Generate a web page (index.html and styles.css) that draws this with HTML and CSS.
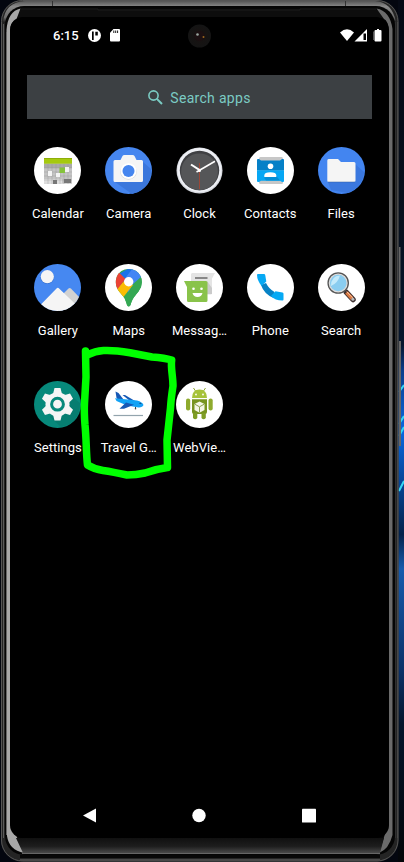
FILE: index.html
```html
<!DOCTYPE html>
<html lang="en">
<head>
<meta charset="utf-8">
<title>Apps</title>
<link rel="stylesheet" href="styles.css">
</head>
<body>
<svg class="device" viewBox="0 0 404 862" aria-hidden="true">
  <defs>
    <linearGradient id="wall" x1="0" y1="0" x2="0" y2="1">
      <stop offset="0" stop-color="#050914"/><stop offset=".25" stop-color="#07101d"/><stop offset=".4" stop-color="#06162d"/>
      <stop offset=".43" stop-color="#0a3d8c"/><stop offset=".5" stop-color="#0968df"/><stop offset=".62" stop-color="#03224b"/>
      <stop offset=".66" stop-color="#165bad"/><stop offset=".78" stop-color="#0a3066"/><stop offset=".84" stop-color="#04152b"/><stop offset="1" stop-color="#030508"/>
    </linearGradient>
    <linearGradient id="top" x1="0" y1="0" x2="0" y2="1">
      <stop offset="0" stop-color="#555"/><stop offset=".25" stop-color="#898989"/><stop offset=".75" stop-color="#6b6b6b"/><stop offset="1" stop-color="#111"/>
    </linearGradient>
    <linearGradient id="bottom" x1="0" y1="0" x2="0" y2="1">
      <stop offset="0" stop-color="#101010"/><stop offset=".55" stop-color="#1d1d1d"/><stop offset="1" stop-color="#494949"/>
    </linearGradient>
    <radialGradient id="cam"><stop offset="0" stop-color="#2c1718"/><stop offset=".4" stop-color="#171312"/><stop offset="1" stop-color="#141414"/></radialGradient>
  </defs>
  <rect width="404" height="862" fill="#03060f"/>
  <rect x="398" width="6" height="862" fill="url(#wall)"/>
  <path d="M399 392l5-7M399 424l5-8M399 436l5-9M399 491l5-10" stroke="#35d7f5" stroke-width="2"/>
  <path d="M399 247h1.500v51H399zM399 341h2v105h-2z" fill="#666"/>
  <rect x="1" y="0" width="397.500" height="861.500" rx="21" fill="#242424"/>
  <rect x="1.500" y=".5" width="396.500" height="860.500" rx="21" fill="none" stroke="#555"/>
  <path d="M3 22Q5 2 25 1H375Q392 2 396 22L392 20Q388 7 373 7H25Q9 7 6 23Z" fill="url(#top)"/>
  <path d="M52.500 1v5M345.500 1v5" stroke="#333"/>
  <rect x="5" y="6" width="390" height="849" rx="19" fill="#050505"/>
  <path d="M3.500 24V838" stroke="#5a5a5a"/>
  <path d="M395.500 22V838" stroke="#303030"/><path d="M397.500 22V838" stroke="#484848"/>
  <path d="M22 8.500H370" stroke="#080808" stroke-width="2"/>
  <path d="M21 9H376L386 18H15Z" fill="#0d0d0d"/>
  <path d="M21 9H98V10H300V9H376" stroke="#1d1d1d" fill="none"/>
  <path d="M6.500 30Q8 11 20.500 8.500L16.500 19Q10 22 10 32V820Q11 831 16 835L24 853Q9 850 7 836Z" fill="#a8a8a8"/>
  <path d="M6.500 32V835" stroke="#666"/>
  <path d="M376.500 8.500Q390 11 392.500 29V835Q389 849 379 853L385 834Q389 828 389 821V32Q388 20 384 19Z" fill="#6b6b6b"/>
  <path d="M16 838H384L380 853H23Z" fill="url(#bottom)"/>
  <path d="M22 853.500H380" stroke="#666"/>
  <path d="M20 856.500H380" stroke="#080808" stroke-width="3"/>
  <path d="M20 860H380" stroke="#484848" stroke-width="2"/>
  <rect x="10" y="17" width="379" height="821" rx="13"/>
  <circle cx="199.500" cy="36" r="11.500" fill="url(#cam)"/>
  <circle cx="199.500" cy="36" r="5" fill="#1c1012"/>
  <circle cx="197.500" cy="34.500" r="1.300" fill="#9aa7a0"/><circle cx="203.500" cy="37" r="1" fill="#9b651e"/>
</svg>

<main class="screen">
  <header class="status">
    <span class="time">6:15</span>
    <svg class="notice" viewBox="0 0 13 13"><circle cx="6.500" cy="6.500" r="6.500" fill="#fff"/><path d="M4 2.500H5.700V11H4zM7.300 2.800H9.800V6.500H7.300z" fill="#000"/></svg>
    <svg class="sd" viewBox="0 0 10 13"><path d="M3.500 0H9q1 0 1 1V11.500q0 1-1 1H1q-1 0-1-1V3.700z" fill="#fff"/><path d="M3.800 1.500V4M5.700 1.500V4M7.600 1.500V4" stroke="#000" stroke-width=".9"/></svg>
    <svg class="signals" viewBox="0 0 42 13">
      <path d="M0 3.500Q7-3 14 3.500L7 12z" fill="#fff"/>
      <path d="M27 0V12.500H14.500z" fill="#fff"/><path d="M23.500 4.500H26V11H23.500z" fill="#000"/>
      <path d="M35.500 1H37V0h2v1h1.500q1 0 1 1v9.500q0 1-1 1h-5q-1 0-1-1V2q0-1 1-1z" fill="#fff"/><path d="M33.500 2.500v8.500" stroke="#555"/>
    </svg>
  </header>

  <div class="search">
    <svg class="glass" viewBox="0 0 15 15"><circle cx="5.500" cy="5.500" r="4.600" fill="none" stroke="#7bcbc3" stroke-width="1.600"/><path d="M8.900 8.900L14 14" stroke="#7bcbc3" stroke-width="2"/></svg>
    <span class="hint">Search apps</span>
  </div>

  <section class="apps">
    <div class="app">
      <svg class="icon" viewBox="0 0 47 47"><circle cx="23.500" cy="23.500" r="23.500" fill="#fff"/>
        <path d="M10 16h28v20.700H10z" fill="#c4c4c4"/><path d="M10 11h28v5.700H10z" fill="#a5c90f"/><path d="M10 11h28v1H10z" fill="#8fae08"/>
        <path d="M10 17h28v4H10z" fill="#aaa"/><path d="M10 32h18v4.700H10z" fill="#dedede"/>
        <path d="M14 17v20M18 17v20M22 17v20M26 17v20M30 17v20M34 17v20M10 21h28M10 25h28M10 29h28M10 33h28" stroke="#929292" stroke-width=".35"/>
        <path d="M19 33h4v4h-4zM30 32h7v4h-7z" fill="#777"/><path d="M14 24h4v5h-4zM22 26h4v4h-4zM31 20h4v5h-4z" fill="#f4f4f4"/><path d="M25.500 20.500H31V26h-5.500z" fill="#85c33c"/></svg>
      <span>Calendar</span>
    </div>
    <div class="app">
      <svg class="icon" viewBox="0 0 47 47"><circle cx="23.500" cy="23.500" r="23.500" fill="#4686ef"/>
        <path d="M38 15L46 22Q47 38 33 45L27 47 10 35z" fill="#3b77dc"/>
        <path d="M10 13H15.500L17.500 9Q18 8 19.500 8H27.500Q29 8 29.500 9L31.500 13H36.500Q38 13 38 14.500V33.500Q38 35 36.500 35H10Q8.500 35 8.500 33.500V14.500Q8.500 13 10 13z" fill="#f5f5f5"/>
        <circle cx="23.500" cy="24.500" r="8.300" fill="#dadada"/><circle cx="23.500" cy="24" r="8" fill="#fff"/><circle cx="23.500" cy="24" r="6" fill="#4686ef"/></svg>
      <span>Camera</span>
    </div>
    <div class="app">
      <svg class="icon" viewBox="0 0 47 47"><circle cx="23.500" cy="23.500" r="23" fill="#d5d8de"/><circle cx="23.500" cy="23.100" r="22" fill="#eef0f5"/><circle cx="23.500" cy="23.500" r="19.700" fill="#404144"/><circle cx="23.500" cy="24.800" r="18.400" fill="#555658"/>
        <path d="M23.500 16V42" stroke="#ad442f" stroke-width=".8"/><path d="M15 17.500L24.500 23.700" stroke="#fff" stroke-width="2"/><path d="M20.500 25L39 14.200" stroke="#fff" stroke-width="1.600"/><circle cx="23.500" cy="23.500" r="1.500" fill="#fff"/></svg>
      <span>Clock</span>
    </div>
    <div class="app">
      <svg class="icon" viewBox="0 0 47 47"><circle cx="23.500" cy="23.500" r="23.500" fill="#fff"/>
        <rect x="12" y="10" width="24" height="27" rx="1.500" fill="#c7c7c7"/><path d="M10 13q0-1 1-1h1l2 1.500h19l2-1.500h1q1 0 1 1V23.500H10z" fill="#0580c7"/>
        <path d="M10 23.300H37V34q0 1-1 1h-1l-2-1.300H14L12 35h-1q-1 0-1-1z" fill="#06a7f4"/><path d="M29 28.500l4 5H19l-2-3z" fill="#058fd6"/><circle cx="23.500" cy="19.300" r="2.800" fill="#fff"/><path d="M17.300 30V28.500q0-3.300 6-3.300t6 3.300V30z" fill="#fff"/></svg>
      <span>Contacts</span>
    </div>
    <div class="app">
      <svg class="icon" viewBox="0 0 47 47"><circle cx="23.500" cy="23.500" r="23.500" fill="#4385f0"/><path d="M37 17l9 8Q45 40 30 46L13 43 10 35z" fill="#3b78df"/><path d="M10.500 12H20l3 3H36q1.500 0 1.500 1.500V33.500Q37.500 35 36 35H10.700Q9.300 35 9.300 33.500V13.500q0-1.500 1.200-1.500z" fill="#f5f5f5"/><path d="M10 35h27" stroke="#315e9e" stroke-width=".5"/></svg>
      <span>Files</span>
    </div>
    <div class="app">
      <svg class="icon" viewBox="0 0 47 47"><clipPath id="gc"><circle cx="23.500" cy="23.500" r="23.500"/></clipPath><g clip-path="url(#gc)"><path d="M0 0h47v47H0z" fill="#4688f1"/><circle cx="13.300" cy="13.300" r="6.800" fill="#3c76d3"/><circle cx="13.300" cy="12.600" r="6.600" fill="#f5f5f5"/><path d="M25 34L34.500 24.500q1.200-1 2.400 0L49 37V47H25z" fill="#d2d2d2"/><path d="M3 44.500L22.500 24.500q1.300-1.300 2.600 0L45 43.500V47H3z" fill="#f5f5f5"/></g></svg>
      <span>Gallery</span>
    </div>
    <div class="app">
      <svg class="icon" viewBox="0 0 47 47"><circle cx="23.500" cy="23.500" r="23.500" fill="#fff"/>
        <clipPath id="pin"><path d="M23.700 5Q32 5 35.500 12Q39 20 33.500 27.500C28 34 27 36 25.500 41Q23.700 44.500 22 41C20.500 35 18 32 14.500 28Q9 21 11.700 13Q15 5 23.700 5z"/></clipPath>
        <g clip-path="url(#pin)"><path d="M10 4h29v40H10z" fill="#34a853"/><path d="M14 10L24 4l5 2L19 17z" fill="#1a73e8"/><path d="M28 4L38 12 24 29 18 17z" fill="#4285f4"/><path d="M38 11V42H17L27 21z" fill="#34a853"/><path d="M10 27L19 17l9 4L16 36z" fill="#fbbc04"/><path d="M10 9l4.500 0 6 6L10 28z" fill="#ea4335"/></g><circle cx="23.700" cy="17.800" r="4.700" fill="#fff"/></svg>
      <span>Maps</span>
    </div>
    <div class="app">
      <svg class="icon" viewBox="0 0 47 47"><circle cx="23.500" cy="23.500" r="23.500" fill="#fff"/><path d="M16 9H39L36 14.500V29q0 1.500-1.500 1.500H16.500Q15 30.500 15 29V10z" fill="#e4e4e4"/><path d="M31 17l5 7v6h-5z" fill="#cacaca"/><path d="M19 14h12.500" stroke="#888" stroke-width="2"/><path d="M8 17H30q1.500 0 1.500 1.500V36.500Q31.500 38 30 38H12.500Q11 38 11 36.500V23z" fill="#89c34a"/><circle cx="17.500" cy="24.700" r="1.300" fill="#fff"/><circle cx="25.500" cy="24.700" r="1.300" fill="#fff"/><path d="M16.500 29H26.500Q25.500 33 21.500 33T16.500 29z" fill="#fff"/></svg>
      <span>Messag…</span>
    </div>
    <div class="app">
      <svg class="icon" viewBox="0 0 47 47"><circle cx="23.500" cy="23.500" r="23.500" fill="#fff"/><path d="M14 21l5-2q3 6 8.500 9l-1 6Q17 30 14 21z" fill="#0782c5"/><path d="M11 10H17q1 0 1.200 1L19.300 17.500 14.500 22Q10 16 10 11q0-1 1-1z" fill="#06a9f4"/><path d="M28.500 27.300L35.500 28.500q1 .2 1 1.200V35.500q0 1-1 1Q28 36.500 24 32z" fill="#06a9f4"/></svg>
      <span>Phone</span>
    </div>
    <div class="app">
      <svg class="icon" viewBox="0 0 47 47"><circle cx="23.500" cy="23.500" r="23.500" fill="#fff"/><path d="M26 26l3 3" stroke="#555" stroke-width="3"/><path d="M28.500 28.500L35 35.500" stroke="#3d3030" stroke-width="5.500" stroke-linecap="round"/><path d="M28.500 28.500L34 34.500" stroke="#d87943" stroke-width="3.500"/><path d="M28.700 27.700l6 6.200" stroke="#ffc19a"/><circle cx="34.900" cy="35.200" r="1.500" fill="#bbb"/><circle cx="20.200" cy="19" r="9.800" fill="#8acdf0" stroke="#555" stroke-width="2"/><circle cx="20.200" cy="19" r="8.900" fill="none" stroke="#ddd" stroke-width="1.200"/><path d="M13 22Q13 12 22 11.500 20 19 13 22z" fill="#c4eafa"/></svg>
      <span>Search</span>
    </div>
    <div class="app">
      <svg class="icon" viewBox="0 0 47 47"><circle cx="23.500" cy="23.500" r="23.500" fill="#07897b"/><path d="M35 13L46 22Q46 38 34 44L27 46 16 36z" fill="#067d70"/>
        <g fill="#f5f5f5"><circle cx="23.500" cy="23.200" r="12"/><path id="tooth" d="M20.500 7h6l1.500 6h-9zM20.500 39.400h6l1.500-6h-9z"/><use href="#tooth" transform="rotate(60 23.500 23.200)"/><use href="#tooth" transform="rotate(120 23.500 23.200)"/></g><circle cx="23.500" cy="23.200" r="5.900" fill="#f5f5f5" stroke="#07897b" stroke-width="3"/></svg>
      <span>Settings</span>
    </div>
    <div class="app">
      <svg class="icon" viewBox="0 0 47 47"><circle cx="23.500" cy="23.500" r="23.500" fill="#fff"/><path d="M8.500 34.500H38" stroke="#93a4ad" stroke-width="1.200"/><path d="M10.500 10.500L13.500 12 18.500 18.500 14 19.500 11.500 17z" fill="#1658b5"/><path d="M17.500 14L20 14 30 20 25 20z" fill="#1658b5"/><path d="M10 17.300L20 18.300 32 19.500Q37.500 21 38.500 24 37.500 27 32 26.300L22 24.500 11.500 20z" fill="#12a2f5"/><path d="M21 21.500L29 23.800 19 27.700H14.500z" fill="#1658b5"/><path d="M30.500 26v2" stroke="#444"/><circle cx="30.500" cy="27.800" r=".8" fill="#444"/><path d="M35 21.500l2 1.500-3-.3z" fill="#17497a"/></svg>
      <span>Travel G…</span>
    </div>
    <div class="app">
      <svg class="icon" viewBox="0 0 47 47"><circle cx="23.500" cy="23.500" r="23.500" fill="#fff"/><path d="M19.500 10l-2-3M27.500 10l2-3" stroke="#8fa832"/><path d="M16 17Q16 8.500 23.500 8.500T31 17z" fill="#a6c23a"/><rect x="10" y="17.500" width="4.200" height="12" rx="2" fill="#8eaa2d"/><rect x="32.500" y="17.500" width="4.200" height="12" rx="2" fill="#8eaa2d"/><path d="M16 18.300H31V31q0 2-2 2H18q-2 0-2-2z" fill="#789420"/><path d="M17 32h4.300v5q-2 2.500-4.300 0zM25.500 32h4.300v5q-2.300 2.500-4.300 0z" fill="#7f9d25"/><circle cx="20" cy="13.500" r=".9" fill="#fff"/><circle cx="27" cy="13.500" r=".9" fill="#fff"/><path d="M23.500 20.500l5 2.500v6l-5 2.800-5-2.800v-6z" fill="#f4f6e6"/><path d="M19 23.300l4.500 2.500 4.500-2.500M23.500 26v5.500" stroke="#8b9f4d" fill="none"/></svg>
      <span>WebVie…</span>
    </div>
  </section>

  <nav class="nav">
    <svg viewBox="0 0 14 15"><path d="M13 .5V14.500L0 7.500z" fill="#fff"/></svg>
    <svg viewBox="0 0 14 15"><circle cx="7" cy="7.500" r="6.700" fill="#fff"/></svg>
    <svg viewBox="0 0 14 15"><rect y=".8" width="14" height="13.800" rx=".7" fill="#fff"/></svg>
  </nav>
</main>

<svg class="marker" viewBox="0 0 404 862" aria-hidden="true"><path d="M85.500 351Q85.500 355 87.500 355Q95 351 103.500 350.500C112 350 120 351 130 352.700L152 357Q165 358 171.700 360C170.500 368 173 376 173 386Q171 399 170.500 408L167 440 167.500 467.500Q156 469 145 473Q136 475 127 475Q113 472 103 470.500Q94 469 87.500 465C86 452 86.500 440 85 425Q84 412 84.500 403L86 377 85.500 351"/></svg>
</body>
</html>
```
FILE: styles.css
```css
* { box-sizing: border-box; }
body {
  margin: 0;
  width: 404px;
  height: 862px;
  overflow: hidden;
  position: relative;
  background: #03060f;
  color: #fff;
  font-family: Roboto, sans-serif;
}
svg { display: block; flex: none; }
.device, .marker {
  position: absolute;
  inset: 0;
  width: 404px;
  height: 862px;
}
.marker {
  pointer-events: none;
  fill: none;
  stroke: #0f0;
  stroke-width: 7.5;
  stroke-linecap: round;
  stroke-linejoin: round;
}
.screen {
  position: relative;
  width: 404px;
  height: 862px;
  padding: 25px 22px 39px;
  display: flex;
  flex-direction: column;
}
.status {
  height: 20px;
  padding: 0 0 0 31px;
  display: flex;
  align-items: center;
}
.time {
  width: 36px;
  padding-top: 1px;
  font-size: 13px;
  font-weight: 500;
  line-height: 20px;
  letter-spacing: 0;
}
.notice { width: 13px; height: 13px; }
.sd { width: 10px; height: 13px; margin-left: 9px; }
.signals { width: 42px; height: 13px; margin-left: 220px; }
.search {
  width: 345px;
  height: 44px;
  margin: 30px 0 0 5px;
  display: flex;
  align-items: center;
  justify-content: center;
  gap: 7px;
  background: #3c4043;
  color: #7bcbc3;
  font-size: 14px;
  letter-spacing: .3px;
}
.hint { padding-top: 2px; }
.glass { width: 15px; height: 15px; }
.apps {
  width: 354px;
  margin: 28px 0 0 .5px;
  display: grid;
  grid-template-columns: repeat(5, 1fr);
  grid-auto-rows: 117px;
}
.app {
  display: flex;
  flex-direction: column;
  align-items: center;
  gap: 10px;
  font-size: 13px;
  line-height: 19px;
  letter-spacing: .05px;
  white-space: nowrap;
}
.icon { width: 47px; height: 47px; }
.nav {
  margin-top: auto;
  padding: 0 66.5px 0 60.5px;
  display: flex;
  justify-content: space-between;
}
.nav svg { width: 14px; height: 15px; }
```
